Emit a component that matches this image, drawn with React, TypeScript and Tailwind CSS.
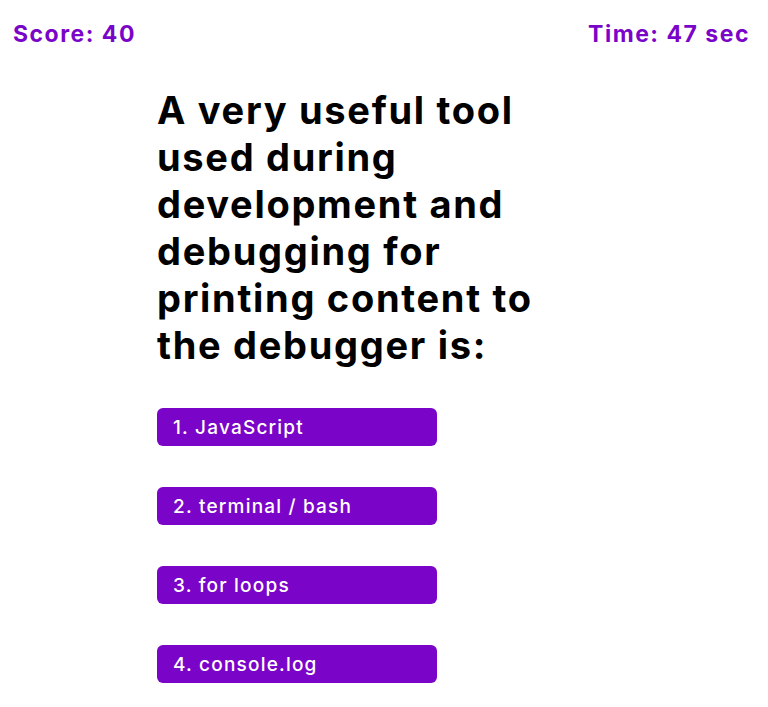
const answers = ["1. JavaScript", "2. terminal / bash", "3. for loops", "4. console.log"];

export default function App() {
  return (
    <div className="min-h-[707px] bg-white font-['Inter',sans-serif]">
      <header className="flex justify-between pl-[13px] pr-[18px] pt-[17px] text-[23px] font-bold text-[#7a05c8] tracking-[1.5px]">
        <span>Score: 40</span>
        <span>Time: 47 sec</span>
      </header>
      <main className="ml-[157px] mt-[35px] w-[420px]">
        <h1 className="text-[38px] font-bold leading-[47px] tracking-[1.7px] text-black">
          A very useful tool used during development and debugging for printing content to the debugger is:
        </h1>
        <div className="mt-[39px] flex flex-col gap-[41px]">
          {answers.map((a, i) => (
            <button
              key={i}
              className="flex h-[38px] w-[280px] items-center rounded-md bg-[#7a05c8] px-4 pt-[4px] text-left text-[19px] font-medium tracking-[1.2px] text-white">
              {a}
            </button>
          ))}
        </div>
      </main>
    </div>
  );
}
